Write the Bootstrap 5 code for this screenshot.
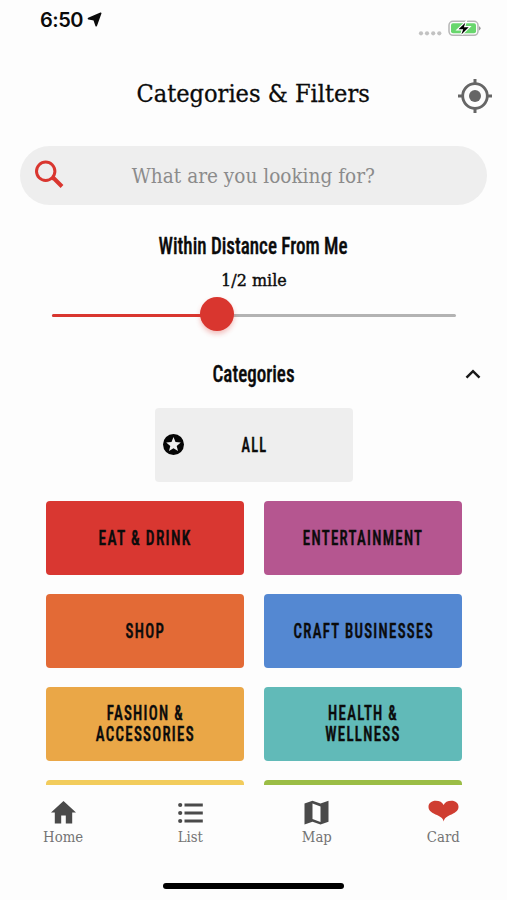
<!DOCTYPE html>
<html lang="en">
<head>
<meta charset="utf-8">
<meta name="viewport" content="width=device-width, initial-scale=1">
<title>Categories &amp; Filters</title>
<link href="https://cdn.jsdelivr.net/npm/bootstrap@5.3.0/dist/css/bootstrap.min.css" rel="stylesheet">
<style>
:root { --slab: "DejaVu Serif", "Liberation Serif", serif; --cond: "Roboto Condensed", Roboto, sans-serif; --brand: #d9362f; }
body { background: #fdfdfd; color: #0b0b0b; font-family: var(--slab); }
.screen { width: 507px; height: 900px; }
.fit { display: inline-block; white-space: nowrap; transform: scaleX(var(--k, 1)); }
svg { display: block; flex: none; }
.statusbar { height: 58px; padding: 9px 26px 0 40px; }
.clock { font: 600 20px/22px Inter, sans-serif; letter-spacing: -.5px; }
.arrow { margin-top: 3px; }
.power { margin-top: 9px; }
.topbar { height: 76px; }
.topbar h1 { font-size: 24px; line-height: 30px; padding-top: 21px; --k: .94; -webkit-text-stroke: .3px; }
.locate { right: 15px; top: 21px; }
.search { height: 59px; margin: 12px 20px 0 20px; background: #eee; color: #8b8b8b; font-size: 20px; --k: .925; }
.search-icon { left: 12px; top: 12px; }
.cond { font: 500 23px/28px var(--cond); -webkit-text-stroke: .35px; --k: .828; }
.distance { margin-top: 28px; }
.mile { font-size: 17px; line-height: 24px; margin-top: 7px; --k: .94; -webkit-text-stroke: .4px; }
.slider { height: 34px; margin: 5px 51px 0 52px; }
.track { height: 3px; border-radius: 2px; background: #b3b3b3; margin-top: 3px; }
.track-on { width: 164px; height: 3px; border-radius: 2px; background: var(--brand); }
.thumb { left: 147.5px; top: .3px; width: 34px; height: 34px; background: var(--brand); box-shadow: 0 3px 5px rgba(217,54,47,.3); }
.cats { height: 28px; margin-top: 30px; }
.chev { right: 26px; top: 7px; }
.tile { width: 198px; height: 73.5px; border-radius: 4px; font: 500 20.5px/21.5px var(--cond); letter-spacing: 1.8px; -webkit-text-stroke: .5px; padding: 1px 0 0 1px; --k: .725; }
.tile-eat { --k: .75; }
.all { margin: 19px auto 0 155px; background: #eee; --k: .7; }
.star { left: 8px; top: 26px; }
.tiles { display: grid; grid-template-columns: 198px 198px; column-gap: 20px; row-gap: 19.5px; margin: 19.5px 0 0 46px; height: 284px; overflow: hidden; }
.tabs { height: 75px; padding-top: 14px; color: #747474; font-size: 14px; line-height: 20px; --k: .95; }
.tabs > div { width: 126.7px; gap: 1px; }
.home-ind { width: 181px; height: 6px; background: #000; margin: 23px 0 0 163px; }
.below { height: 11px; padding: 9px 0 0 20px; font-size: 18px; line-height: 20px; }
</style>
</head>
<body>
<main class="screen overflow-hidden position-relative d-flex flex-column">
  <div class="statusbar d-flex justify-content-between">
    <div class="d-flex gap-1"><span class="clock">6:50</span>
      <svg class="arrow" width="15" height="15" viewBox="0 0 15 15"><path d="M13.700 1.300 1.500 6.600l5.600 1.200 2.100 6z" fill="#0b0b0b" stroke="#0b0b0b" stroke-width="1.600" stroke-linejoin="round"/></svg></div>
    <div class="d-flex">
      <svg class="power" width="64" height="20" viewBox="0 0 64 20">
        <g fill="#c2c2c2"><circle cx="4" cy="15.300" r="2.100"/><circle cx="10" cy="15.300" r="2.100"/><circle cx="16.200" cy="15.300" r="2.100"/><circle cx="22.300" cy="15.300" r="2.100"/></g>
        <rect x="32" y="3.300" width="29" height="14" rx="4" fill="none" stroke="#b5b5b5" stroke-width="1.500"/>
        <rect x="34" y="5.300" width="25" height="10" rx="2" fill="#68d66d"/>
        <path d="M62 8.200v4.200q1.600-.6 1.600-2.100T62 8.200z" fill="#999"/>
        <path d="M48.300 4.800 41.500 11.200h4.700l-1.800 5.200 7.300-7.200h-4.800z" fill="#000" stroke="#fff" stroke-width="2.400" paint-order="stroke"/>
      </svg></div>
  </div>
  <header class="topbar position-relative text-center">
    <h1 class="m-0 fw-normal"><span class="fit">Categories &amp; Filters</span></h1>
    <svg class="locate position-absolute" width="34" height="34" viewBox="0 0 34 34" fill="none" stroke="#666"><circle cx="17" cy="17" r="12.300" stroke-width="2.800"/><path d="M17 0v5M17 29v5M0 17h5M29 17h5" stroke-width="3"/><circle cx="17" cy="17" r="6" fill="#666" stroke="none"/></svg>
  </header>
  <div class="search rounded-pill position-relative d-flex align-items-center justify-content-center">
    <svg class="search-icon position-absolute" width="34" height="34" viewBox="0 0 34 34" fill="none" stroke="#d9362f"><circle cx="13.700" cy="13.300" r="9.200" stroke-width="3"/><path d="m20.200 20 1.800.5 8 8" stroke-width="4" stroke-linejoin="round"/></svg>
    <span class="fit">What are you looking for?</span>
  </div>
  <div class="distance cond text-center"><span class="fit">Within Distance From Me</span></div>
  <div class="mile text-center"><span class="fit">1/2 mile</span></div>
  <div class="slider position-relative d-flex align-items-center"><div class="track w-100"><div class="track-on"></div></div><div class="thumb position-absolute rounded-circle"></div></div>
  <div class="cats cond position-relative text-center"><span class="fit">Categories</span>
    <svg class="chev position-absolute" width="16" height="12" viewBox="0 0 16 12"><path d="m1.500 9.700 6.500-6.500 6.500 6.500" fill="none" stroke="#1a1a1a" stroke-width="2.500"/></svg></div>
  <div class="tile all position-relative d-flex align-items-center justify-content-center">
    <svg class="star position-absolute" width="21" height="21" viewBox="0 0 21 21"><circle cx="10.500" cy="10.500" r="10.500" fill="#050505"/><path d="m10.500 3 2 5 5.300.4-4.100 3.500 1.300 5.200-4.500-2.800L6 17.100l1.300-5.200-4.100-3.500 5.300-.4z" fill="#eee"/></svg>
    <span class="fit">ALL</span></div>
  <div class="tiles">
    <div class="tile tile-eat d-flex align-items-center justify-content-center" style="background:#d93731"><span class="fit">EAT &amp; DRINK</span></div>
    <div class="tile d-flex align-items-center justify-content-center" style="background:#b55690"><span class="fit">ENTERTAINMENT</span></div>
    <div class="tile d-flex align-items-center justify-content-center" style="background:#e36a36"><span class="fit">SHOP</span></div>
    <div class="tile d-flex align-items-center justify-content-center" style="background:#5488d2"><span class="fit">CRAFT BUSINESSES</span></div>
    <div class="tile d-flex align-items-center justify-content-center text-center" style="background:#eaa747"><span class="fit">FASHION &amp;<br>ACCESSORIES</span></div>
    <div class="tile d-flex align-items-center justify-content-center text-center" style="background:#61bab8"><span class="fit">HEALTH &amp;<br>WELLNESS</span></div>
    <div class="tile" style="background:#f2cc5c"></div>
    <div class="tile" style="background:#9bbd46"></div>
  </div>
  <nav class="tabs d-flex">
    <div class="d-flex flex-column align-items-center"><svg width="27" height="27" viewBox="0 0 27 27" fill="#4a4a4a"><path d="M13.500 2 1 13.400h3.800V24.500h6.400v-8h4.600v8h6.400V13.400H26z"/></svg><span class="fit">Home</span></div>
    <div class="d-flex flex-column align-items-center"><svg width="27" height="27" viewBox="0 0 27 27" fill="#4a4a4a"><circle cx="3.200" cy="6" r="2.100"/><circle cx="3.200" cy="14" r="2.100"/><circle cx="3.200" cy="22" r="2.100"/><path d="M7.500 4.600h18.300v2.900H7.500zM7.500 12.600h18.300v2.900H7.500zM7.500 20.600h18.300v2.900H7.500z"/></svg><span class="fit">List</span></div>
    <div class="d-flex flex-column align-items-center"><svg width="27" height="27" viewBox="0 0 27 27"><path d="m1.500 4.600 8-2.800 8 2.800 8-2.800v21L17.500 25.600l-8-2.800-8 2.800z" fill="#4a4a4a"/><path d="m9.500 4.600 8 2.800v15.500l-8-2.800z" fill="#fdfdfd"/></svg><span class="fit">Map</span></div>
    <div class="d-flex flex-column align-items-center"><svg width="31" height="27" viewBox="0 0 31 27"><path d="M15.700 22.500C15 18.500 11.500 17 7.500 15.400 2.500 13.300.5 11 .5 7.800.5 4 3.700 1.700 7.700 1.700c3.900 0 6.700 1.500 7.900 4.300 1.200-2.800 4-4.300 7.900-4.300 4 0 7 2.300 7 6.100 0 3.200-2 5.500-7 7.600-4 1.600-7.100 3.100-7.800 7.100z" fill="#cf3d31"/></svg><span class="fit">Card</span></div>
  </nav>
  <div class="home-ind rounded-pill"></div>
  <div class="below overflow-hidden">List of</div>
</main>
</body>
</html>
